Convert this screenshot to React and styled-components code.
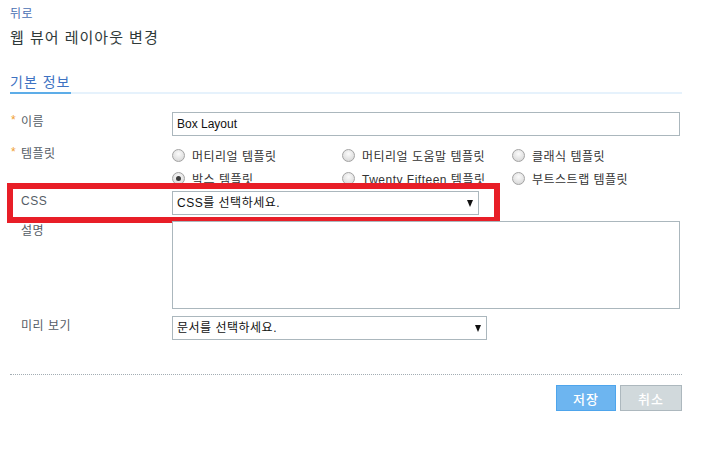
import React from "react";
import styled, { createGlobalStyle } from "styled-components";

const Global = createGlobalStyle`
  html, body { margin: 0; padding: 0; background: #fff; }
  body {
    font-family: "Liberation Sans", "Noto Sans CJK KR", sans-serif;
    font-size: 12px;
    color: #333;
  }
  * { box-sizing: border-box; }
`;

const Page = styled.div`
  padding: 5px 40px 20px 10px;
  width: 722px;
`;

const BackLink = styled.a`
  display: block;
  font-size: 12px;
  line-height: 18px;
  color: #4a6fb3;
  text-decoration: none;
  letter-spacing: 0.5px;
`;

const Title = styled.h1`
  margin: 5px 0 0;
  font-size: 15px;
  line-height: 20px;
  font-weight: normal;
  color: #2f3a3a;
  letter-spacing: 1px;
`;

const TabBar = styled.div`
  margin-top: 24px;
  display: flex;
  border-bottom: 2px solid #e6f2fc;
`;

const Tab = styled.div`
  font-size: 14px;
  line-height: 20px;
  color: #3d72c2;
  border-bottom: 2px solid #5dade8;
  margin-bottom: -2px;
  padding-right: 1px;
  letter-spacing: 1px;
`;

const Form = styled.div`
  display: flex;
  flex-direction: column;
`;

const Row = styled.div`
  position: relative;
  display: grid;
  grid-template-columns: 162px 1fr;
  margin-top: ${(p) => p.$top}px;
`;

const Label = styled.div`
  padding: 2px 0 0 11px;
  line-height: 16px;
  color: #555d66;
  position: relative;
  letter-spacing: 0.5px;
`;

const Star = styled.span`
  position: absolute;
  left: 1px;
  top: 0px;
  color: #f0a030;
  font-size: 12px;
`;

const TextInput = styled.input`
  width: calc(100% - 2px);
  height: 24px;
  border: 1px solid #abb7bd;
  padding: 0 4px;
  font: inherit;
  font-size: 12px;
  color: #111;
  outline: none;
`;

const TextArea = styled.textarea`
  width: calc(100% - 2px);
  height: 88px;
  border: 1px solid #abb7bd;
  resize: none;
  font: inherit;
  outline: none;
  display: block;
`;

const RadioGrid = styled.div`
  display: grid;
  grid-template-columns: repeat(3, 170px);
  grid-auto-rows: 23px;
`;

const RadioItem = styled.label`
  display: flex;
  align-items: center;
  gap: 7px;
  color: #333;
  white-space: nowrap;
  letter-spacing: 0.5px;
`;

const Radio = styled.input.attrs({ type: "radio" })`
  appearance: none;
  margin: 0;
  width: 13px;
  height: 13px;
  border-radius: 50%;
  border: 1px solid #a3a3a3;
  background: radial-gradient(circle at 50% 35%, #fbfbfb 0%, #e2e2e2 60%, #d0d0d0 100%);
  position: relative;
  flex: none;
  &:checked::after {
    content: "";
    position: absolute;
    left: 3px;
    top: 3px;
    width: 5px;
    height: 5px;
    border-radius: 50%;
    background: #3a3a3a;
  }
`;

const SelectWrap = styled.div`
  position: relative;
  width: ${(p) => p.$w}px;
  &::after {
    content: "";
    position: absolute;
    right: 6px;
    top: 9px;
    border-left: 3.5px solid transparent;
    border-right: 3.5px solid transparent;
    border-top: 7px solid #111;
    pointer-events: none;
  }
`;

const Select = styled.select`
  appearance: none;
  width: 100%;
  height: 24px;
  border: 1px solid #abb7bd;
  background: #fff;
  padding: 0 4px;
  font: inherit;
  font-size: 12px;
  color: #111;
  outline: none;
  border-radius: 0;
  letter-spacing: 0.5px;
`;

const Highlight = styled.div`
  position: absolute;
  left: -3px;
  top: -8px;
  width: 493px;
  height: 40px;
  border: 6px solid #e81e27;
  pointer-events: none;
`;

const Divider = styled.div`
  margin-top: 34px;
  border-top: 1px dotted #a3adb3;
`;

const Actions = styled.div`
  margin-top: 10px;
  display: flex;
  justify-content: flex-end;
  gap: 4px;
`;

const Button = styled.button`
  width: ${(p) => p.$w}px;
  height: 26px;
  font-family: "Noto Sans CJK KR", sans-serif;
  font-size: 13px;
  font-weight: 500;
  color: #fff;
  border: 1px solid ${(p) => (p.$primary ? "#4ea5ec" : "#adb8be")};
  background: ${(p) => (p.$primary ? "#6db5f0" : "#d1d9dc")};
  cursor: pointer;
  padding: 0;
  letter-spacing: 1px;
`;

const templates = [
  ["머티리얼 템플릿", false],
  ["머티리얼 도움말 템플릿", false],
  ["클래식 템플릿", false],
  ["박스 템플릿", true],
  ["Twenty Fifteen 템플릿", false],
  ["부트스트랩 템플릿", false],
];

export default function App() {
  return (
    <Page>
      <Global />
      <BackLink href="#">뒤로</BackLink>
      <Title>웹 뷰어 레이아웃 변경</Title>
      <TabBar>
        <Tab>기본 정보</Tab>
      </TabBar>
      <Form>
        <Row $top={18}>
          <Label>
            <Star>*</Star>이름
          </Label>
          <TextInput defaultValue="Box Layout" />
        </Row>
        <Row $top={8}>
          <Label>
            <Star>*</Star>템플릿
          </Label>
          <RadioGrid>
            {templates.map(([name, checked]) => (
              <RadioItem key={name}>
                <Radio name="tpl" defaultChecked={checked} />
                {name}
              </RadioItem>
            ))}
          </RadioGrid>
        </Row>
        <Row $top={1}>
          <Label>CSS</Label>
          <SelectWrap $w={307}>
            <Select defaultValue="">
              <option value="">CSS를 선택하세요.</option>
            </Select>
          </SelectWrap>
          <Highlight />
        </Row>
        <Row $top={6}>
          <Label>설명</Label>
          <TextArea />
        </Row>
        <Row $top={7}>
          <Label>미리 보기</Label>
          <SelectWrap $w={315}>
            <Select defaultValue="">
              <option value="">문서를 선택하세요.</option>
            </Select>
          </SelectWrap>
        </Row>
      </Form>
      <Divider />
      <Actions>
        <Button $primary $w={60}>저장</Button>
        <Button $w={62}>취소</Button>
      </Actions>
    </Page>
  );
}
